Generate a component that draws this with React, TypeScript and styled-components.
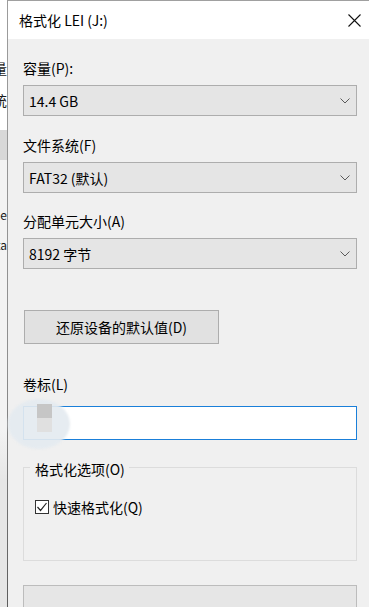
import React from "react";
import styled, { createGlobalStyle } from "styled-components";

const Global = createGlobalStyle`
  html, body { margin: 0; padding: 0; }
  body {
    width: 369px; height: 607px; overflow: hidden;
    font-family: "Noto Sans CJK SC", "Noto Sans", sans-serif;
    font-size: 14px; color: #000;
  }
`;

const Screen = styled.div`
  display: flex;
  width: 369px;
  height: 607px;
  overflow: hidden;
`;

const BackStrip = styled.div`
  width: 7px;
  flex-shrink: 0;
  display: flex;
  flex-direction: column;
  overflow: hidden;
  background: linear-gradient(#ffffff 0, #ffffff 130px, #d8d8d8 130px, #d8d8d8 160px, #f3f3f3 160px, #f3f3f3 430px, #e6e6e6 480px);
`;

const BackLine = styled.div<{ $top: number; $size?: number }>`
  margin-top: ${(p) => p.$top}px;
  height: 16px;
  display: flex;
  justify-content: flex-end;
  white-space: nowrap;
  font-size: ${(p) => p.$size ?? 14}px;
  line-height: 16px;
  color: #1a1a1a;
`;

const Edge = styled.div`
  width: 1px;
  flex-shrink: 0;
  background: linear-gradient(#9c9c9c 0%, #8e8e8e 60%, #5c5c5c 100%);
`;

const Dialog = styled.div`
  flex: 1;
  display: flex;
  flex-direction: column;
  background: #f0f0f0;
  border-top: 1px solid #a0a0a0;
`;

const TitleBar = styled.div`
  height: 38px;
  flex-shrink: 0;
  background: #fff;
  display: flex;
  align-items: center;
  justify-content: space-between;
  padding: 0 7px 0 11px;
`;

const Title = styled.span`
  font-size: 14px;
  line-height: 20px;
  margin-top: -1px;
`;

const Close = styled.div`
  width: 14px;
  height: 14px;
  display: flex;
  align-items: center;
  justify-content: center;
  margin-right: 1px;
`;

const Body = styled.div`
  display: flex;
  flex-direction: column;
  padding: 0 12px 0 15px;
`;

const Label = styled.div<{ $mt: number }>`
  margin-top: ${(p) => p.$mt}px;
  line-height: 20px;
  height: 20px;
`;

const Select = styled.div<{ $mt?: number }>`
  margin-top: ${(p) => p.$mt ?? 7}px;
  height: 31px;
  box-sizing: border-box;
  background: #e5e5e5;
  border: 1px solid #adadad;
  display: flex;
  align-items: center;
  justify-content: space-between;
  padding: 0 6px 0 5px;
  line-height: 20px;
`;

const Button = styled.div`
  margin-top: 41px;
  margin-left: 1px;
  width: 195px;
  height: 34px;
  box-sizing: border-box;
  background: #e1e1e1;
  border: 1px solid #adadad;
  display: flex;
  align-items: center;
  justify-content: center;
  line-height: 20px;
`;

const InputWrap = styled.div`
  position: relative;
  margin-top: 12px;
`;

const Input = styled.div`
  height: 34px;
  box-sizing: border-box;
  background: #fff;
  border: 1px solid #1a7fd9;
`;

const Blob = styled.div`
  position: absolute;
  left: -15px;
  top: -7px;
  width: 62px;
  height: 50px;
  border-radius: 50%;
  background: rgba(228, 234, 240, 0.92);
  filter: blur(1px);
`;

const Pixel = styled.div<{ $top: number; $c: string }>`
  position: absolute;
  left: 14px;
  top: ${(p) => p.$top}px;
  width: 15px;
  height: 14px;
  background: ${(p) => p.$c};
`;

const Group = styled.div`
  position: relative;
  margin-top: 27px;
  height: 94px;
  box-sizing: border-box;
  border: 1px solid #dcdcdc;
  display: flex;
  flex-direction: column;
  padding-left: 11px;
`;

const Legend = styled.div`
  position: absolute;
  top: -9px;
  left: 6px;
  padding: 0 4px 0 5px;
  background: #f0f0f0;
  line-height: 20px;
`;

const CheckRow = styled.div`
  margin-top: 29px;
  display: flex;
  align-items: center;
  gap: 4px;
  line-height: 20px;
`;

const Box = styled.div`
  width: 14px;
  height: 14px;
  box-sizing: border-box;
  border: 1px solid #333;
  background: #fff;
  display: flex;
  align-items: center;
  justify-content: center;
`;

const Progress = styled.div`
  margin-top: 24px;
  height: 26px;
  box-sizing: border-box;
  background: #e6e6e6;
  border: 1px solid #bcbcbc;
`;

const Chevron = () => (
  <svg width="10" height="6" viewBox="0 0 10 6">
    <path d="M0.5 0.5 L5 5 L9.5 0.5" fill="none" stroke="#5a5a5a" strokeWidth="1" />
  </svg>
);

export default function App() {
  return (
    <>
      <Global />
      <Screen>
        <BackStrip>
          <BackLine $top={60}>容量</BackLine>
          <BackLine $top={16}>系统</BackLine>
          <BackLine $top={99} $size={12}>ie</BackLine>
          <BackLine $top={14} $size={12}>data</BackLine>
        </BackStrip>
        <Edge />
        <Dialog>
          <TitleBar>
            <Title>格式化 LEI (J:)</Title>
            <Close>
              <svg width="13" height="13" viewBox="0 0 13 13">
                <path d="M0.5 0.5 L12.5 12.5 M12.5 0.5 L0.5 12.5" stroke="#111" strokeWidth="1.1" />
              </svg>
            </Close>
          </TitleBar>
          <Body>
            <Label $mt={19}>容量(P):</Label>
            <Select>
              <span>14.4 GB</span>
              <Chevron />
            </Select>
            <Label $mt={19}>文件系统(F)</Label>
            <Select>
              <span>FAT32 (默认)</span>
              <Chevron />
            </Select>
            <Label $mt={18}>分配单元大小(A)</Label>
            <Select>
              <span>8192 字节</span>
              <Chevron />
            </Select>
            <Button>还原设备的默认值(D)</Button>
            <Label $mt={30}>卷标(L)</Label>
            <InputWrap>
              <Input />
              <Blob />
              <Pixel $top={-2} $c="#c6c6c6" />
              <Pixel $top={12} $c="#e0e0e0" />
            </InputWrap>
            <Group>
              <Legend>格式化选项(O)</Legend>
              <CheckRow>
                <Box>
                  <svg width="12" height="12" viewBox="0 0 12 12">
                    <path d="M1.5 6 L4.5 9.5 L10.5 2" fill="none" stroke="#222" strokeWidth="1.2" />
                  </svg>
                </Box>
                <span>快速格式化(Q)</span>
              </CheckRow>
            </Group>
            <Progress />
          </Body>
        </Dialog>
      </Screen>
    </>
  );
}
